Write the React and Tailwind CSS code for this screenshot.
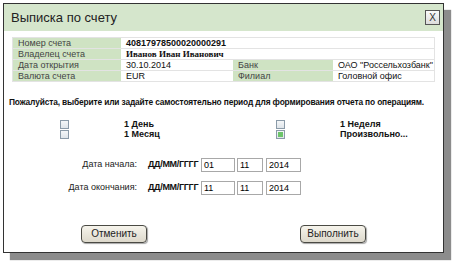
import React from "react";

const font = { fontFamily: '"Liberation Sans", Arial, sans-serif' };

function Box({ checked }) {
  return (
    <span className="w-[9px] h-[9px] border border-[#8a9aa8] bg-gradient-to-b from-[#f4f6f8] to-[#dfe5ea] flex items-center justify-center">
      {checked && <span className="w-[5px] h-[5px] bg-[#6cc46a]" />}
    </span>
  );
}

function DateRow({ label, d, m, y }) {
  return (
    <div className="flex items-center h-[14px]">
      <span className="w-[133px] text-right text-[9px] text-[#222]">{label}</span>
      <span className="ml-[11px] w-[53px] text-[9px] font-bold text-[#111] tracking-[-0.3px]">ДД/ММ/ГГГГ</span>
      <span className="w-[34px] h-[14px] border border-[#a8a8a8] text-[9px] pl-[2px] leading-[12px]">{d}</span>
      <span className="ml-[2px] w-[26px] h-[14px] border border-[#a8a8a8] text-[9px] pl-[2px] leading-[12px]">{m}</span>
      <span className="ml-[3px] w-[35px] h-[14px] border border-[#a8a8a8] text-[9px] pl-[2px] leading-[12px]">{y}</span>
    </div>
  );
}

function Btn({ children }) {
  return (
    <button className="w-[66px] h-[18px] rounded-[4px] border border-[#4a4a44] bg-gradient-to-b from-[#f6f4ec] to-[#ddd9cc] text-[10px] text-[#222] shadow-[1px_1px_1px_rgba(0,0,0,0.35)]">
      {children}
    </button>
  );
}

export default function App() {
  const cellL = "bg-[#cfe3c3] text-[#444] pl-[5px]";
  const cellV = "bg-white text-[#111] pl-[5px]";
  return (
    <div className="w-[454px] h-[265px] bg-white pt-[3px] pl-[3px]" style={font}>
      <div className="w-[441px] h-[250px] bg-white border border-[#333] flex flex-col shadow-[7px_7px_1px_#8c8c8c]">
        <div className="h-[27px] bg-[#d5e6cc] flex items-center justify-between pl-[7px] pr-[3px]">
          <span className="text-[13px] text-[#222]">Выписка по счету</span>
          <span className="w-[15px] h-[15px] border border-[#555] bg-gradient-to-b from-[#fafafa] to-[#dcdcdc] flex items-center justify-center text-[10px] leading-none text-[#333]">X</span>
        </div>
        <div className="mx-[8px] mt-[6px] border border-[#e3e3e3] text-[9px] leading-[10px]">
          <div className="grid grid-cols-[108px_1fr] border-b border-[#e3e3e3]">
            <div className={cellL}>Номер счета</div>
            <div className={cellV + " font-bold"}>40817978500020000291</div>
          </div>
          <div className="grid grid-cols-[108px_1fr] border-b border-[#e3e3e3]">
            <div className={cellL}>Владелец счета</div>
            <div className={cellV + " font-bold"} style={{ fontFamily: '"Liberation Serif", serif' }}>Иванов Иван Иванович</div>
          </div>
          <div className="grid grid-cols-[108px_112px_100px_1fr] border-b border-[#e3e3e3]">
            <div className={cellL}>Дата открытия</div>
            <div className={cellV}>30.10.2014</div>
            <div className={cellL}>Банк</div>
            <div className={cellV}>ОАО "Россельхозбанк"</div>
          </div>
          <div className="grid grid-cols-[108px_112px_100px_1fr]">
            <div className={cellL}>Валюта счета</div>
            <div className={cellV}>EUR</div>
            <div className={cellL}>Филиал</div>
            <div className={cellV}>Головной офис</div>
          </div>
        </div>
        <div className="mt-[15px] pl-[5px] text-[8.4px] leading-[11px] font-bold text-[#111] whitespace-nowrap tracking-[-0.15px]">
          Пожалуйста, выберите или задайте самостоятельно период для формирования отчета по операциям.
        </div>
        <div className="mt-[11px] grid grid-cols-[272px_1fr] text-[9px] font-bold text-[#111] leading-[10px]">
          <div className="flex flex-col">
            <div className="flex items-center"><span className="ml-[56px]"><Box /></span><span className="ml-[55px]">1 День</span></div>
            <div className="flex items-center"><span className="ml-[56px]"><Box /></span><span className="ml-[55px]">1 Месяц</span></div>
          </div>
          <div className="flex flex-col">
            <div className="flex items-center"><Box /><span className="ml-[55px]">1 Неделя</span></div>
            <div className="flex items-center"><Box checked /><span className="ml-[55px]">Произвольно...</span></div>
          </div>
        </div>
        <div className="mt-[19px] flex flex-col gap-[9px]">
          <DateRow label="Дата начала:" d="01" m="11" y="2014" />
          <DateRow label="Дата окончания:" d="11" m="11" y="2014" />
        </div>
        <div className="mt-[25px] flex">
          <span className="ml-[77px]"><Btn>Отменить</Btn></span>
          <span className="ml-[153px]"><Btn>Выполнить</Btn></span>
        </div>
      </div>
    </div>
  );
}
